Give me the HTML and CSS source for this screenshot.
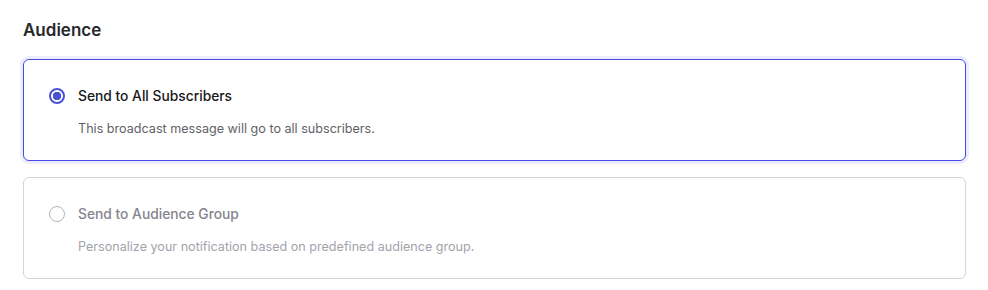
FILE: index.html
```html
<!DOCTYPE html>
<html lang="en">
<head>
    <meta charset="UTF-8">
    <title>Audience</title>
    <link rel="stylesheet" href="styles.css">
</head>
<body>
<div class="audience">
    <h2 class="title">Audience</h2>
    <div class="options">
        <label class="option selected">
            <div class="option-head">
                <span class="radio"></span>
                <span class="option-name">Send to All Subscribers</span>
            </div>
            <p class="option-desc">This broadcast message will go to all subscribers.</p>
        </label>
        <label class="option disabled">
            <div class="option-head">
                <span class="radio"></span>
                <span class="option-name">Send to Audience Group</span>
            </div>
            <p class="option-desc">Personalize your notification based on predefined audience group.</p>
        </label>
    </div>
</div>
</body>
</html>
```

FILE: styles.css
```css
body, h2, p {
    margin: 0;
    padding: 0;
}

body {
    background: #fff;
    font-family: Inter, "Noto Sans", sans-serif;
    color: #27272a;
}

.audience {
    width: 943px;
    padding: 19px 0 0 23px;
}

.title {
    font-size: 17px;
    line-height: 22px;
    font-weight: 600;
    color: #27272a;
    margin-bottom: 18px;
}

.options {
    display: flex;
    flex-direction: column;
    gap: 16px;
}

.option {
    display: block;
    height: 102px;
    box-sizing: border-box;
    padding: 26px 24px 0;
    border: 1px solid #d4d4d8;
    border-radius: 6px;
    cursor: pointer;
}

.option.selected {
    border-color: #4747e6;
    box-shadow: 0 0 0 3px #ececfc;
}

.option-head {
    display: flex;
    align-items: center;
    gap: 13px;
    height: 20px;
}

.radio {
    width: 16px;
    height: 16px;
    box-sizing: border-box;
    border-radius: 50%;
    border: 1px solid #b4b4bb;
    background: #fff;
    margin-left: 1px;
}

.selected .radio {
    border: 2px solid #4b52d6;
    background: radial-gradient(circle, #4b52d6 0 4px, #fff 4.5px);
}

.option-name {
    font-size: 13.8px;
    font-weight: 500;
    color: #18181b;
}

.option-desc {
    margin: 13px 0 0 30px;
    font-size: 12.6px;
    line-height: 20px;
    color: #5f5f68;
}

.disabled .option-name {
    color: #85858e;
}

.disabled .option-desc {
    color: #a3a3ab;
}
```
